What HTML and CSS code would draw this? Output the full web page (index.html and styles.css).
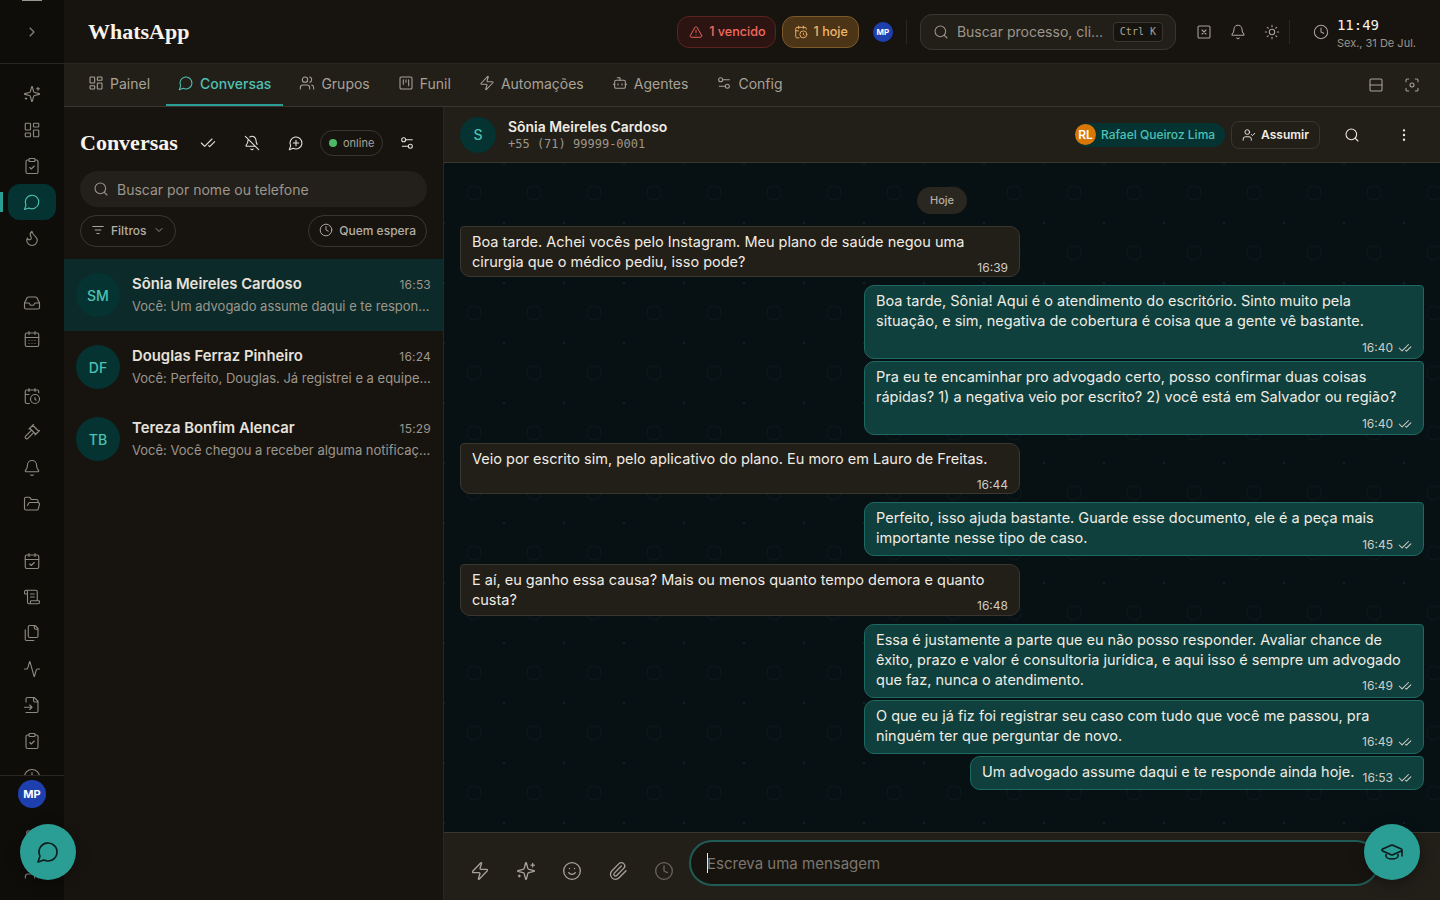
FILE: index.html
```html
<!DOCTYPE html>
<html lang="pt-BR">
<head>
  <meta charset="UTF-8" />
  <title>WhatsApp</title>
  <link rel="stylesheet" href="styles.css">
</head>
<body>

  <svg class="defs" aria-hidden="true">
    <symbol id="chevron-right" viewBox="0 0 24 24"><path d="m9 18 6-6-6-6"/></symbol>
    <symbol id="chevron-down" viewBox="0 0 24 24"><path d="m6 9 6 6 6-6"/></symbol>
    <symbol id="sparkles" viewBox="0 0 24 24"><path d="M9.937 15.5A2 2 0 0 0 8.5 14.063l-6.135-1.582a.5.5 0 0 1 0-.962L8.5 9.936A2 2 0 0 0 9.937 8.5l1.582-6.135a.5.5 0 0 1 .963 0L14.063 8.5A2 2 0 0 0 15.5 9.937l6.135 1.581a.5.5 0 0 1 0 .964L15.5 14.063a2 2 0 0 0-1.437 1.437l-1.582 6.135a.5.5 0 0 1-.963 0z"/><path d="M20 3v4M22 5h-4M4 17v2M5 18H3"/></symbol>
    <symbol id="dashboard" viewBox="0 0 24 24"><rect x="3" y="3" width="7" height="9" rx="1"/><rect x="14" y="3" width="7" height="5" rx="1"/><rect x="14" y="12" width="7" height="9" rx="1"/><rect x="3" y="16" width="7" height="5" rx="1"/></symbol>
    <symbol id="clipboard-check" viewBox="0 0 24 24"><rect x="8" y="2" width="8" height="4" rx="1"/><path d="M16 4h2a2 2 0 0 1 2 2v14a2 2 0 0 1-2 2H6a2 2 0 0 1-2-2V6a2 2 0 0 1 2-2h2"/><path d="m9 14 2 2 4-4"/></symbol>
    <symbol id="message" viewBox="0 0 24 24"><path d="M7.9 20A9 9 0 1 0 4 16.1L2 22Z"/></symbol>
    <symbol id="message-plus" viewBox="0 0 24 24"><path d="M7.9 20A9 9 0 1 0 4 16.1L2 22Z"/><path d="M8 12h8M12 8v8"/></symbol>
    <symbol id="flame" viewBox="0 0 24 24"><path d="M8.5 14.5A2.5 2.5 0 0 0 11 12c0-1.38-.5-2-1-3-1.072-2.143-.224-4.054 2-6 .5 2.5 2 4.9 4 6.5 2 1.6 3 3.5 3 5.5a7 7 0 1 1-14 0c0-1.153.433-2.294 1-3a2.5 2.5 0 0 0 2.5 2.5z"/></symbol>
    <symbol id="inbox" viewBox="0 0 24 24"><path d="M22 12h-6l-2 3h-4l-2-3H2"/><path d="M5.45 5.11 2 12v6a2 2 0 0 0 2 2h16a2 2 0 0 0 2-2v-6l-3.45-6.89A2 2 0 0 0 16.76 4H7.24a2 2 0 0 0-1.79 1.11z"/></symbol>
    <symbol id="calendar-days" viewBox="0 0 24 24"><path d="M8 2v4M16 2v4"/><rect x="3" y="4" width="18" height="18" rx="2"/><path d="M3 10h18M8 14h.01M12 14h.01M16 14h.01M8 18h.01M12 18h.01M16 18h.01"/></symbol>
    <symbol id="calendar-clock" viewBox="0 0 24 24"><path d="M21 7.5V6a2 2 0 0 0-2-2H5a2 2 0 0 0-2 2v14a2 2 0 0 0 2 2h3.5M16 2v4M8 2v4M3 10h5M17.5 17.5 16 16.3V14"/><circle cx="16" cy="16" r="6"/></symbol>
    <symbol id="calendar-check" viewBox="0 0 24 24"><path d="M8 2v4M16 2v4"/><rect x="3" y="4" width="18" height="18" rx="2"/><path d="M3 10h18M9 16l2 2 4-4"/></symbol>
    <symbol id="gavel" viewBox="0 0 24 24"><path d="m14.5 12.5-8 8a2.119 2.119 0 1 1-3-3l8-8M16 16l6-6M8 8l6-6M9 7l8 8M21 11l-8-8"/></symbol>
    <symbol id="bell" viewBox="0 0 24 24"><path d="M10.268 21a2 2 0 0 0 3.464 0M3.262 15.326A1 1 0 0 0 4 17h16a1 1 0 0 0 .74-1.673C19.41 13.956 18 12.499 18 8A6 6 0 0 0 6 8c0 4.499-1.411 5.956-2.738 7.326"/></symbol>
    <symbol id="bell-off" viewBox="0 0 24 24"><path d="M10.268 21a2 2 0 0 0 3.464 0M17 17H4a1 1 0 0 1-.74-1.673C4.59 13.956 6 12.499 6 8a6 6 0 0 1 .258-1.742M2 2l20 20M8.668 3.01A6 6 0 0 1 18 8c0 2.687.77 4.653 1.707 6.05"/></symbol>
    <symbol id="folder-open" viewBox="0 0 24 24"><path d="m6 14 1.5-2.9A2 2 0 0 1 9.24 10H20a2 2 0 0 1 1.94 2.5l-1.54 6a2 2 0 0 1-1.95 1.5H4a2 2 0 0 1-2-2V5a2 2 0 0 1 2-2h3.9a2 2 0 0 1 1.69.9l.81 1.2a2 2 0 0 0 1.67.9H18a2 2 0 0 1 2 2v2"/></symbol>
    <symbol id="scroll-text" viewBox="0 0 24 24"><path d="M15 12h-5M15 8h-5M19 17V5a2 2 0 0 0-2-2H4M8 21h12a2 2 0 0 0 2-2v-1a1 1 0 0 0-1-1H11a1 1 0 0 0-1 1v1a2 2 0 1 1-4 0V5a2 2 0 1 0-4 0v2a1 1 0 0 0 1 1h3"/></symbol>
    <symbol id="files" viewBox="0 0 24 24"><path d="M20 7h-3a2 2 0 0 1-2-2V2M9 18a2 2 0 0 1-2-2V4a2 2 0 0 1 2-2h7l4 4v10a2 2 0 0 1-2 2ZM3 7.6v12.8A1.6 1.6 0 0 0 4.6 22h9.8"/></symbol>
    <symbol id="activity" viewBox="0 0 24 24"><path d="M22 12h-2.48a2 2 0 0 0-1.93 1.46l-2.35 8.36a.25.25 0 0 1-.48 0L9.24 2.18a.25.25 0 0 0-.48 0l-2.35 8.36A2 2 0 0 1 4.49 12H2"/></symbol>
    <symbol id="file-input" viewBox="0 0 24 24"><path d="M4 22h14a2 2 0 0 0 2-2V7l-5-5H6a2 2 0 0 0-2 2v4M14 2v4a2 2 0 0 0 2 2h4M2 15h10M9 18l3-3-3-3"/></symbol>
    <symbol id="users" viewBox="0 0 24 24"><path d="M16 21v-2a4 4 0 0 0-4-4H6a4 4 0 0 0-4 4v2"/><circle cx="9" cy="7" r="4"/><path d="M22 21v-2a4 4 0 0 0-3-3.87M16 3.13a4 4 0 0 1 0 7.75"/></symbol>
    <symbol id="kanban" viewBox="0 0 24 24"><rect x="3" y="3" width="18" height="18" rx="2"/><path d="M8 7v7M12 7v4M16 7v9"/></symbol>
    <symbol id="zap" viewBox="0 0 24 24"><path d="M4 14a1 1 0 0 1-.78-1.63l9.9-10.2a.5.5 0 0 1 .86.46l-1.92 6.02A1 1 0 0 0 13 10h7a1 1 0 0 1 .78 1.63l-9.9 10.2a.5.5 0 0 1-.86-.46l1.92-6.02A1 1 0 0 0 11 14z"/></symbol>
    <symbol id="bot" viewBox="0 0 24 24"><path d="M12 8V4H8"/><rect x="4" y="8" width="16" height="12" rx="2"/><path d="M2 14h2M20 14h2M15 13v2M9 13v2"/></symbol>
    <symbol id="sliders" viewBox="0 0 24 24"><path d="M20 7h-9M14 17H5"/><circle cx="17" cy="17" r="3"/><circle cx="7" cy="7" r="3"/></symbol>
    <symbol id="rows" viewBox="0 0 24 24"><rect x="3" y="3" width="18" height="18" rx="2"/><path d="M3 12h18"/></symbol>
    <symbol id="focus" viewBox="0 0 24 24"><circle cx="12" cy="12" r="3"/><path d="M3 7V5a2 2 0 0 1 2-2h2M17 3h2a2 2 0 0 1 2 2v2M21 17v2a2 2 0 0 1-2 2h-2M7 21H5a2 2 0 0 1-2-2v-2"/></symbol>
    <symbol id="alert" viewBox="0 0 24 24"><path d="m21.73 18-8-14a2 2 0 0 0-3.48 0l-8 14A2 2 0 0 0 4 21h16a2 2 0 0 0 1.73-3M12 9v4M12 17h.01"/></symbol>
    <symbol id="search" viewBox="0 0 24 24"><path d="m21 21-4.34-4.34"/><circle cx="11" cy="11" r="8"/></symbol>
    <symbol id="square-x" viewBox="0 0 24 24"><rect x="3" y="3" width="18" height="18" rx="2"/><path d="m15 9-6 6M9 9l6 6"/></symbol>
    <symbol id="sun" viewBox="0 0 24 24"><circle cx="12" cy="12" r="4"/><path d="M12 2v2M12 20v2M4.93 4.93l1.41 1.41M17.66 17.66l1.41 1.41M2 12h2M20 12h2M6.34 17.66l-1.41 1.41M19.07 4.93l-1.41 1.41"/></symbol>
    <symbol id="clock" viewBox="0 0 24 24"><circle cx="12" cy="12" r="10"/><path d="M12 6v6l4 2"/></symbol>
    <symbol id="check-check" viewBox="0 0 24 24"><path d="M18 6 7 17l-5-5M22 10l-7.5 7.5L13 16"/></symbol>
    <symbol id="filter" viewBox="0 0 24 24"><path d="M3 6h18M7 12h10M10 18h4"/></symbol>
    <symbol id="user-check" viewBox="0 0 24 24"><path d="M16 21v-2a4 4 0 0 0-4-4H6a4 4 0 0 0-4 4v2"/><circle cx="9" cy="7" r="4"/><path d="m16 11 2 2 4-4"/></symbol>
    <symbol id="dots" viewBox="0 0 24 24"><circle cx="12" cy="5" r="1"/><circle cx="12" cy="12" r="1"/><circle cx="12" cy="19" r="1"/></symbol>
    <symbol id="smile" viewBox="0 0 24 24"><circle cx="12" cy="12" r="10"/><path d="M8 14s1.5 2 4 2 4-2 4-2M9 9h.01M15 9h.01"/></symbol>
    <symbol id="paperclip" viewBox="0 0 24 24"><path d="m16 6-8.414 8.586a2 2 0 0 0 2.829 2.829l8.414-8.586a4 4 0 1 0-5.657-5.657l-8.379 8.551a6 6 0 1 0 8.485 8.485l8.379-8.551"/></symbol>
    <symbol id="cap" viewBox="0 0 24 24"><path d="M21.42 10.922a1 1 0 0 0-.019-1.838L12.83 5.18a2 2 0 0 0-1.66 0L2.6 9.08a1 1 0 0 0 0 1.832l8.57 3.908a2 2 0 0 0 1.66 0zM22 10v6M6 12.5V16a6 3 0 0 0 12 0v-3.5"/></symbol>
  </svg>

  <div class="app">

    <!-- Left rail -->
    <aside class="rail">
      <div class="rail-top">
        <svg class="ic"><use href="#chevron-right"/></svg>
      </div>
      <nav class="rail-nav">
        <div class="rail-group">
          <a class="rail-item"><svg class="ic"><use href="#sparkles"/></svg></a>
          <a class="rail-item"><svg class="ic"><use href="#dashboard"/></svg></a>
          <a class="rail-item"><svg class="ic"><use href="#clipboard-check"/></svg></a>
          <a class="rail-item active"><svg class="ic"><use href="#message"/></svg></a>
          <a class="rail-item"><svg class="ic"><use href="#flame"/></svg></a>
        </div>
        <div class="rail-group rail-group-wide">
          <a class="rail-item"><svg class="ic"><use href="#inbox"/></svg></a>
          <a class="rail-item"><svg class="ic"><use href="#calendar-days"/></svg></a>
        </div>
        <div class="rail-group">
          <a class="rail-item"><svg class="ic"><use href="#calendar-clock"/></svg></a>
          <a class="rail-item"><svg class="ic"><use href="#gavel"/></svg></a>
          <a class="rail-item"><svg class="ic"><use href="#bell"/></svg></a>
          <a class="rail-item"><svg class="ic"><use href="#folder-open"/></svg></a>
        </div>
        <div class="rail-group">
          <a class="rail-item"><svg class="ic"><use href="#calendar-check"/></svg></a>
          <a class="rail-item"><svg class="ic"><use href="#scroll-text"/></svg></a>
          <a class="rail-item"><svg class="ic"><use href="#files"/></svg></a>
          <a class="rail-item"><svg class="ic"><use href="#activity"/></svg></a>
          <a class="rail-item"><svg class="ic"><use href="#file-input"/></svg></a>
          <a class="rail-item"><svg class="ic"><use href="#clipboard-check"/></svg></a>
          <a class="rail-item"><svg class="ic"><use href="#clock"/></svg></a>
        </div>
      </nav>
      <div class="rail-bottom">
        <div class="avatar-mp">MP</div>
        <svg class="ic"><use href="#sliders"/></svg>
        <svg class="ic"><use href="#users"/></svg>
      </div>
    </aside>

    <div class="main">

      <!-- Header -->
      <header class="topbar">
        <div class="brand">WhatsApp</div>
        <div class="topbar-right">
          <span class="alert-pill red"><svg class="ic ic-14"><use href="#alert"/></svg>1 vencido</span>
          <span class="alert-pill amber"><svg class="ic ic-14"><use href="#calendar-clock"/></svg>1 hoje</span>
          <span class="avatar-sm">MP</span>
          <span class="vline"></span>
          <div class="global-search">
            <svg class="ic"><use href="#search"/></svg>
            <span class="gs-text">Buscar processo, cli...</span>
            <kbd>Ctrl K</kbd>
          </div>
          <div class="top-icons">
            <svg class="ic"><use href="#square-x"/></svg>
            <svg class="ic"><use href="#bell"/></svg>
            <svg class="ic"><use href="#sun"/></svg>
          </div>
          <span class="vline"></span>
          <svg class="ic clock-ic"><use href="#clock"/></svg>
          <div class="clock">
            <div class="clock-time">11:49</div>
            <div class="clock-date">Sex., 31 De Jul.</div>
          </div>
        </div>
      </header>

      <!-- Tabs -->
      <div class="tabs">
        <a class="tab"><svg class="ic"><use href="#dashboard"/></svg>Painel</a>
        <a class="tab active"><svg class="ic"><use href="#message"/></svg>Conversas</a>
        <a class="tab"><svg class="ic"><use href="#users"/></svg>Grupos</a>
        <a class="tab"><svg class="ic"><use href="#kanban"/></svg>Funil</a>
        <a class="tab"><svg class="ic"><use href="#zap"/></svg>Automações</a>
        <a class="tab"><svg class="ic"><use href="#bot"/></svg>Agentes</a>
        <a class="tab"><svg class="ic"><use href="#sliders"/></svg>Config</a>
        <div class="tabs-right">
          <svg class="ic"><use href="#rows"/></svg>
          <svg class="ic"><use href="#focus"/></svg>
        </div>
      </div>

      <div class="workspace">

        <!-- Conversation list -->
        <section class="list-panel">
          <div class="list-head">
            <h2>Conversas</h2>
            <svg class="ic"><use href="#check-check"/></svg>
            <svg class="ic"><use href="#bell-off"/></svg>
            <svg class="ic"><use href="#message-plus"/></svg>
            <span class="online"><i></i>online</span>
            <svg class="ic"><use href="#sliders"/></svg>
          </div>
          <div class="list-search">
            <svg class="ic"><use href="#search"/></svg>
            Buscar por nome ou telefone
          </div>
          <div class="list-filters">
            <span class="chip"><svg class="ic ic-14"><use href="#filter"/></svg>Filtros<svg class="ic ic-12"><use href="#chevron-down"/></svg></span>
            <span class="chip"><svg class="ic ic-14"><use href="#clock"/></svg>Quem espera</span>
          </div>
          <div class="conv active">
            <div class="conv-avatar">SM</div>
            <div class="conv-body">
              <div class="conv-top"><strong>Sônia Meireles Cardoso</strong><time>16:53</time></div>
              <div class="conv-preview">Você: Um advogado assume daqui e te respon...</div>
            </div>
          </div>
          <div class="conv">
            <div class="conv-avatar">DF</div>
            <div class="conv-body">
              <div class="conv-top"><strong>Douglas Ferraz Pinheiro</strong><time>16:24</time></div>
              <div class="conv-preview">Você: Perfeito, Douglas. Já registrei e a equipe...</div>
            </div>
          </div>
          <div class="conv">
            <div class="conv-avatar">TB</div>
            <div class="conv-body">
              <div class="conv-top"><strong>Tereza Bonfim Alencar</strong><time>15:29</time></div>
              <div class="conv-preview">Você: Você chegou a receber alguma notificaç...</div>
            </div>
          </div>
        </section>

        <!-- Chat -->
        <section class="chat">
          <div class="chat-head">
            <div class="chat-avatar">S</div>
            <div class="chat-who">
              <div class="chat-name">Sônia Meireles Cardoso</div>
              <div class="chat-phone">+55 (71) 99999-0001</div>
            </div>
            <div class="chat-actions">
              <span class="assignee"><i>RL</i>Rafael Queiroz Lima</span>
              <span class="take"><svg class="ic ic-14"><use href="#user-check"/></svg>Assumir</span>
              <svg class="ic chat-search"><use href="#search"/></svg>
              <svg class="ic chat-more"><use href="#dots"/></svg>
            </div>
          </div>

          <div class="messages">
            <div class="day">Hoje</div>

            <div class="msg in">Boa tarde. Achei vocês pelo Instagram. Meu plano de saúde negou uma cirurgia que o médico pediu, isso pode?<span class="meta">16:39</span></div>

            <div class="msg out">Boa tarde, Sônia! Aqui é o atendimento do escritório. Sinto muito pela situação, e sim, negativa de cobertura é coisa que a gente vê bastante.<span class="meta">16:40<svg class="ic"><use href="#check-check"/></svg></span></div>
            <div class="msg out next">Pra eu te encaminhar pro advogado certo, posso confirmar duas coisas rápidas? 1) a negativa veio por escrito? 2) você está em Salvador ou região?<span class="meta">16:40<svg class="ic"><use href="#check-check"/></svg></span></div>

            <div class="msg in">Veio por escrito sim, pelo aplicativo do plano. Eu moro em Lauro de Freitas.<span class="meta">16:44</span></div>

            <div class="msg out">Perfeito, isso ajuda bastante. Guarde esse documento, ele é a peça mais importante nesse tipo de caso.<span class="meta">16:45<svg class="ic"><use href="#check-check"/></svg></span></div>

            <div class="msg in">E aí, eu ganho essa causa? Mais ou menos quanto tempo demora e quanto custa?<span class="meta">16:48</span></div>

            <div class="msg out">Essa é justamente a parte que eu não posso responder. Avaliar chance de êxito, prazo e valor é consultoria jurídica, e aqui isso é sempre um advogado que faz, nunca o atendimento.<span class="meta">16:49<svg class="ic"><use href="#check-check"/></svg></span></div>
            <div class="msg out next">O que eu já fiz foi registrar seu caso com tudo que você me passou, pra ninguém ter que perguntar de novo.<span class="meta">16:49<svg class="ic"><use href="#check-check"/></svg></span></div>
            <div class="msg out next">Um advogado assume daqui e te responde ainda hoje.<span class="meta">16:53<svg class="ic"><use href="#check-check"/></svg></span></div>
          </div>

          <div class="composer">
            <div class="composer-tools">
              <svg class="ic"><use href="#zap"/></svg>
              <svg class="ic"><use href="#sparkles"/></svg>
              <svg class="ic"><use href="#smile"/></svg>
              <svg class="ic"><use href="#paperclip"/></svg>
              <svg class="ic dim"><use href="#clock"/></svg>
            </div>
            <div class="composer-input"><span class="caret"></span>Escreva uma mensagem</div>
          </div>
        </section>
      </div>
    </div>
  </div>

  <button class="fab fab-chat"><svg class="ic"><use href="#message"/></svg></button>
  <button class="fab fab-learn"><svg class="ic"><use href="#cap"/></svg></button>

</body>
</html>
```

FILE: styles.css
```css
* {
  box-sizing: border-box;
}
html, body {
  margin: 0;
  padding: 0;
  height: 100%;
  overflow: hidden;
  font-family: Inter, 'Noto Sans', sans-serif;
  background-color: #171410;
  color: #f0ece4;
}
.defs {
  display: none;
}
.ic {
  width: 16px;
  height: 16px;
  flex: none;
  fill: none;
  stroke: currentColor;
  stroke-width: 1.6;
  stroke-linecap: round;
  stroke-linejoin: round;
}
.ic-14 {
  width: 14px;
  height: 14px;
}
.ic-12 {
  width: 12px;
  height: 12px;
}
.app {
  display: flex;
  height: 900px;
}

/* rail */
.rail {
  width: 64px;
  flex: none;
  display: flex;
  flex-direction: column;
  background-color: #0f0d0a;
  color: #8f8a80;
}
.rail-top {
  height: 64px;
  flex: none;
  display: flex;
  align-items: center;
  justify-content: center;
  border-bottom: 1px solid #2a2722;
  background: linear-gradient(#9c9890, #9c9890) center top / 20px 1px no-repeat;
}
.rail-nav {
  flex: 1;
  min-height: 0;
  overflow: hidden;
  padding-top: 12px;
}
.rail-group {
  margin-bottom: 21px;
}
.rail-group-wide {
  margin-top: 29px;
}
.rail-item {
  display: flex;
  align-items: center;
  justify-content: center;
  height: 36px;
  margin: 0 8px;
  border-radius: 12px;
  position: relative;
}
.rail-item .ic {
  width: 18px;
  height: 18px;
  stroke-width: 1.5;
}
.rail-item.active {
  background-color: #043331;
  color: #4fc0b4;
}
.rail-item.active::before {
  content: "";
  position: absolute;
  left: -8px;
  top: 8px;
  width: 3px;
  height: 20px;
  background-color: #2a9d94;
}
.rail-bottom {
  height: 125px;
  flex: none;
  border-top: 1px solid #2a2722;
  padding-top: 4px;
  display: flex;
  flex-direction: column;
  align-items: center;
  gap: 20px;
  overflow: hidden;
}
.avatar-mp {
  width: 28px;
  height: 28px;
  flex: none;
  border-radius: 50%;
  background-color: #1e40af;
  color: #fff;
  font-size: 11px;
  font-weight: 700;
  display: flex;
  align-items: center;
  justify-content: center;
}

/* main column */
.main {
  flex: 1;
  min-width: 0;
  display: flex;
  flex-direction: column;
}
.topbar {
  height: 64px;
  flex: none;
  display: flex;
  align-items: center;
  justify-content: space-between;
  padding: 0 24px;
  background-color: #171410;
  border-bottom: 1px solid #2a2722;
}
.brand {
  font-family: 'Liberation Serif', serif;
  font-weight: 700;
  font-size: 22px;
  color: #f7f3ea;
}
.topbar-right {
  display: flex;
  align-items: center;
}
.alert-pill {
  display: flex;
  align-items: center;
  gap: 6px;
  height: 32px;
  padding: 0 10px 0 11px;
  border-radius: 12px;
  font-size: 12.6px;
  font-weight: 500;
  margin-right: 6px;
}
.alert-pill.red {
  padding-right: 9px;
  color: #f26b5e;
  background-color: #2c1412;
  border: 1px solid #5c2420;
}
.alert-pill.amber {
  color: #eeb56a;
  background-color: #4c3417;
  border: 1px solid #7c5a2a;
}
.avatar-sm {
  width: 20px;
  height: 20px;
  margin: 0 13px 0 8px;
  border-radius: 50%;
  background-color: #1e40af;
  color: #fff;
  font-size: 8px;
  font-weight: 700;
  display: flex;
  align-items: center;
  justify-content: center;
}
.vline {
  width: 1px;
  height: 24px;
  background-color: #2a2722;
}
.global-search {
  display: flex;
  align-items: center;
  width: 256px;
  height: 36px;
  margin: 0 20px 0 13px;
  padding: 0 12px;
  border: 1px solid #3a362f;
  border-radius: 12px;
  background-color: #221e18;
  color: #9c968b;
  font-size: 14px;
}
.gs-text {
  margin-left: 8px;
  flex: 1;
  white-space: nowrap;
}
.global-search kbd {
  font-family: 'DejaVu Sans Mono', monospace;
  font-size: 10px;
  width: 50px;
  height: 20px;
  line-height: 18px;
  text-align: center;
  border: 1px solid #3a362f;
  border-radius: 4px;
  background-color: #171410;
  color: #a8a297;
}
.top-icons {
  display: flex;
  gap: 18px;
  color: #a8a297;
  margin-right: 9px;
}
.clock-ic {
  color: #a8a297;
  margin: 0 8px 0 23px;
}
.clock {
  padding-top: 4px;
}
.clock-time {
  font-family: 'DejaVu Sans Mono', monospace;
  font-size: 14px;
  line-height: 18px;
  color: #f7f3ea;
}
.clock-date {
  font-size: 11px;
  line-height: 18px;
  color: #9c968b;
}

/* tabs */
.tabs {
  height: 43px;
  flex: none;
  display: flex;
  gap: 4px;
  padding-left: 12px;
  background-color: #221e18;
  border-bottom: 1px solid #3a362f;
  color: #a8a297;
  font-size: 14px;
}
.tab {
  display: flex;
  align-items: center;
  gap: 6px;
  height: 42px;
  padding: 0 12px 2px;
  border-bottom: 2px solid transparent;
}
.tab.active {
  color: #4fc0b4;
  font-weight: 500;
  border-bottom-color: #2a9d94;
}
.tabs-right {
  margin-left: auto;
  display: flex;
  align-items: center;
  gap: 20px;
  padding-right: 20px;
}

.workspace {
  flex: 1;
  min-height: 0;
  display: flex;
}

/* conversation list */
.list-panel {
  width: 380px;
  flex: none;
  background-color: #171410;
  border-right: 1px solid #2a2722;
}
.list-head {
  display: flex;
  align-items: center;
  height: 46px;
  margin-top: 13px;
  padding: 0 16px;
  color: #e6e2da;
}
.list-head h2 {
  margin: 0;
  width: 120px;
  font-family: 'Liberation Serif', serif;
  font-size: 22px;
  font-weight: 700;
  color: #f7f3ea;
}
.list-head .ic:nth-of-type(2) {
  margin: 0 28px;
}
.online {
  display: flex;
  align-items: center;
  gap: 6px;
  height: 26px;
  margin: 0 16px;
  padding: 0 8px;
  border: 1px solid #3a362f;
  border-radius: 13px;
  font-size: 11px;
  color: #a8a297;
}
.online i {
  width: 8px;
  height: 8px;
  border-radius: 50%;
  background-color: #4fb868;
}
.list-search {
  display: flex;
  align-items: center;
  gap: 8px;
  height: 36px;
  margin: 5px 16px 0;
  padding: 0 13px;
  border-radius: 18px;
  background-color: #231f1b;
  color: #9c968b;
  font-size: 14px;
}
.list-filters {
  display: flex;
  justify-content: space-between;
  margin: 8px 16px 12px;
}
.chip {
  display: flex;
  align-items: center;
  gap: 6px;
  height: 32px;
  padding: 0 10px 2px;
  border: 1px solid #3a362f;
  border-radius: 16px;
  font-size: 12px;
  font-weight: 500;
  color: #b4aea3;
}
.conv {
  display: flex;
  gap: 12px;
  height: 72px;
  padding: 14px 12px;
}
.conv.active {
  background-color: #0d2a2a;
}
.conv-avatar {
  width: 44px;
  height: 44px;
  flex: none;
  border-radius: 50%;
  background-color: #043331;
  color: #4fc0b4;
  font-size: 14px;
  font-weight: 500;
  display: flex;
  align-items: center;
  justify-content: center;
}
.conv-body {
  flex: 1;
  min-width: 0;
}
.conv-top {
  display: flex;
  align-items: center;
  justify-content: space-between;
  height: 22px;
}
.conv-top strong {
  font-size: 14.85px;
  font-weight: 600;
  color: #e6e2da;
}
.conv-top time {
  font-size: 12px;
  letter-spacing: 0.2px;
  color: #9c968b;
}
.conv-preview {
  font-size: 13px;
  line-height: 22px;
  color: #9c968b;
  white-space: nowrap;
}

/* chat */
.chat {
  flex: 1;
  min-width: 0;
  display: flex;
  flex-direction: column;
}
.chat-head {
  height: 56px;
  flex: none;
  display: flex;
  align-items: center;
  padding: 0 16px;
  background-color: #221e18;
  border-bottom: 1px solid #3a362f;
}
.chat-avatar {
  width: 36px;
  height: 36px;
  margin-right: 12px;
  border-radius: 50%;
  background-color: #043331;
  color: #4fc0b4;
  font-size: 14px;
  font-weight: 500;
  display: flex;
  align-items: center;
  justify-content: center;
}
.chat-who {
  margin-top: -1px;
}
.chat-name {
  font-size: 13.95px;
  font-weight: 600;
  line-height: 18px;
  color: #f0ece4;
}
.chat-phone {
  margin-top: 1px;
  font-family: 'DejaVu Sans Mono', monospace;
  font-size: 12px;
  line-height: 14px;
  color: #9c968b;
}
.chat-actions {
  margin-left: auto;
  display: flex;
  align-items: center;
}
.assignee {
  display: flex;
  align-items: center;
  gap: 5px;
  height: 24px;
  padding-right: 10px;
  border-radius: 12px;
  background-color: #043331;
  color: #4fc0b4;
  font-size: 12px;
  font-weight: 500;
}
.assignee i {
  width: 21px;
  height: 21px;
  border-radius: 50%;
  background-color: #d97706;
  color: #fff;
  font-style: normal;
  font-size: 12px;
  font-weight: 600;
  display: flex;
  align-items: center;
  justify-content: center;
}
.take {
  display: flex;
  align-items: center;
  gap: 5px;
  height: 28px;
  margin-left: 6px;
  padding: 0 10px;
  border: 1px solid #3a362f;
  border-radius: 8px;
  font-size: 12px;
  font-weight: 600;
  color: #f0ece4;
}
.chat-search {
  margin-left: 24px;
}
.chat-more {
  margin: 0 12px 0 36px;
}

.messages {
  flex: 1;
  min-height: 0;
  display: flex;
  flex-direction: column;
  align-items: flex-start;
  padding: 24px 16px 0;
  background-color: #071114;
  background-image:
    radial-gradient(circle at 30px 30px, transparent 6.5px, #0b1a1c 6.6px, #0b1a1c 7.4px, transparent 7.6px),
    radial-gradient(circle, #0e2326 1px, transparent 1.6px);
  background-size: 60px 60px;
  background-position: 0 0, -30px -30px;
}
.day {
  align-self: center;
  height: 27px;
  margin-bottom: 12px;
  padding: 0 13px;
  border-radius: 14px;
  background-color: #2a2620;
  color: #b4aea3;
  font-size: 11px;
  font-weight: 500;
  line-height: 27px;
}
.msg {
  display: flow-root;
  max-width: 560px;
  padding: 5px 11px 4.2px;
  border: 1px solid #3a362f;
  border-radius: 4px 10px 10px 10px;
  background-color: #221e18;
  font-size: 14.5px;
  line-height: 20px;
  color: #f0ece4;
  margin-bottom: 8px;
}
.msg.out {
  align-self: flex-end;
  width: fit-content;
  padding-bottom: 7px;
  border-color: #1d6a62;
  border-radius: 10px 4px 10px 10px;
  background-color: #0f403d;
}
.msg.out:has(+ .next) {
  margin-bottom: 2px;
}
.meta {
  float: right;
  display: flex;
  align-items: center;
  gap: 5px;
  height: 20px;
  margin-left: 8px;
  padding-top: 11px;
  font-size: 12px;
  line-height: 12px;
  color: #d0ccc4;
}
.msg.out .meta {
  padding-top: 13px;
}
.meta .ic {
  width: 14px;
  height: 14px;
  stroke-width: 1.8;
}

.composer {
  height: 68px;
  flex: none;
  display: flex;
  align-items: center;
  background-color: #221e18;
  border-top: 1px solid #3a362f;
}
.composer-tools {
  display: flex;
  gap: 26px;
  margin: 8px 15px 0 26px;
  color: #a8a297;
}
.composer-tools .ic {
  width: 20px;
  height: 20px;
}
.composer-tools .dim {
  color: #6a655c;
}
.composer-input {
  display: flex;
  align-items: center;
  width: 690px;
  height: 46px;
  padding-left: 16px;
  border: 2px solid #1f5c57;
  border-radius: 23px;
  background-color: #171410;
  color: #7d776d;
  font-size: 15px;
  margin-top: -7px;
}
.caret {
  width: 1px;
  height: 20px;
  margin-right: -1px;
  background-color: #f0ece4;
}
.fab {
  position: fixed;
  width: 56px;
  height: 56px;
  padding: 0;
  border: none;
  border-radius: 50%;
  background-color: #2a9d94;
  color: #0b1a1a;
  display: flex;
  align-items: center;
  justify-content: center;
  box-shadow: 0 4px 14px rgba(0, 0, 0, 0.35);
}
.fab .ic {
  width: 24px;
  height: 24px;
}
.fab-chat {
  left: 20px;
  top: 824px;
}
.fab-learn {
  left: 1364px;
  top: 824px;
}
```
